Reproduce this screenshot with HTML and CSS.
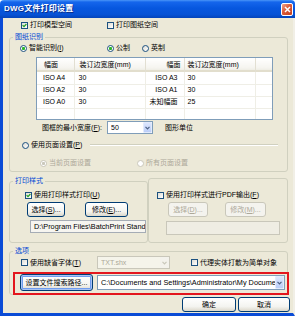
FILE: index.html
```html
<!DOCTYPE html>
<html>
<head>
<meta charset="utf-8">
<title>DWG文件打印设置</title>
<link rel="stylesheet" href="styles.css">
</head>
<body>
<div class="window">
  <div class="titlebar">
    <span class="title">DWG文件打印设置</span>
    <span class="close"><svg width="7" height="7" viewBox="0 0 7 7"><path d="M1 1L6 6M6 1L1 6" stroke="#fff" stroke-width="1.5"/></svg></span>
  </div>
  <div class="client">
    <div class="row top-checks">
      <span class="chk w-model"><span class="box"><svg viewBox="0 0 5 5"><path d="M0.6 2.2L2 3.7L4.4 1" fill="none" stroke="#21A121" stroke-width="1.2"/></svg></span>打印模型空间</span>
      <span class="chk"><span class="box"></span>打印图纸空间</span>
    </div>

    <fieldset class="group g-paper">
      <legend>图纸识别</legend>
      <div class="row radios">
        <span class="opt w-smart"><span class="radio on"></span>智能识别(<u>I</u>)</span>
        <span class="opt w-metric"><span class="radio on"></span>公制</span>
        <span class="opt"><span class="radio"></span>英制</span>
      </div>
      <div class="list">
        <table>
          <tr><th class="c1">幅面</th><th class="c2">装订边宽度(mm)</th><th class="c3">幅面</th><th class="c4">装订边宽度(mm)</th><th class="c5"></th></tr>
          <tr><td>ISO A4</td><td>30</td><td class="r">ISO A3</td><td>30</td><td></td></tr>
          <tr><td>ISO A2</td><td>30</td><td class="r">ISO A1</td><td>30</td><td></td></tr>
          <tr><td>ISO A0</td><td>30</td><td class="r">未知幅面</td><td>25</td><td></td></tr>
          <tr><td></td><td></td><td></td><td></td><td></td></tr>
        </table>
      </div>
      <div class="row minw">
        <span class="lbl">图框的最小宽度(<u>F</u>):</span>
        <span class="combo c50"><span class="val">50</span><span class="drop"><svg width="5" height="4" viewBox="0 0 5 4"><path d="M0.5 0.8L2.5 2.8L4.5 0.8" fill="none" stroke="#4D6185" stroke-width="1.2"/></svg></span></span>
        <span class="unit">图形单位</span>
      </div>
      <div class="row pageset">
        <span class="opt"><span class="radio"></span>使用页面设置(<u>P</u>)</span>
        <span class="sep"></span>
      </div>
      <div class="row pagesub">
        <span class="opt off w-cur"><span class="radio on"></span>当前页面设置</span>
        <span class="opt off"><span class="radio"></span>所有页面设置</span>
      </div>
    </fieldset>

    <div class="styles">
      <fieldset class="group g-style">
        <legend>打印样式</legend>
        <div class="row use-style">
          <span class="chk"><span class="box"><svg viewBox="0 0 5 5"><path d="M0.6 2.2L2 3.7L4.4 1" fill="none" stroke="#21A121" stroke-width="1.2"/></svg></span>使用打印样式打印(<u>U</u>)</span>
        </div>
        <div class="row btns">
          <span class="btn b-sel">选择(<u>S</u>)...</span>
          <span class="btn b-mod">修改(<u>E</u>)...</span>
        </div>
        <div class="field">D:\Program Files\BatchPrint Standard\Print Styles</div>
      </fieldset>
      <div class="group g-pdf">
        <div class="row">
          <span class="chk"><span class="box"></span>使用打印样式进行PDF输出(<u>F</u>)</span>
        </div>
        <div class="row btns">
          <span class="btn off b-sel2">选择(<u>D</u>)...</span>
          <span class="btn off b-mod2">修改(<u>M</u>)...</span>
        </div>
        <div class="field off"></div>
      </div>
    </div>

    <fieldset class="group g-opt">
      <legend>选项</legend>
      <div class="row font-row">
        <span class="chk w-font"><span class="box"></span>使用缺省字体(<u>T</u>)</span>
        <span class="combo off c-txt"><span class="val">TXT.shx</span><span class="drop"><svg width="5" height="4" viewBox="0 0 5 4"><path d="M0.5 0.8L2.5 2.8L4.5 0.8" fill="none" stroke="#C9C7BA" stroke-width="1.2"/></svg></span></span>
        <span class="chk proxy"><span class="box"></span>代理实体打散为简单对象</span>
      </div>
      <div class="mark">
        <span class="btn focus b-path">设置文件搜索路径...</span>
        <span class="combo c-path"><span class="val">C:\Documents and Settings\Administrator\My Documents</span><span class="drop"><svg width="5" height="4" viewBox="0 0 5 4"><path d="M0.5 0.8L2.5 2.8L4.5 0.8" fill="none" stroke="#4D6185" stroke-width="1.2"/></svg></span></span>
      </div>
    </fieldset>

    <div class="row actions">
      <span class="btn b-ok">确定</span>
      <span class="btn b-cancel">取消</span>
    </div>
  </div>
</div>
</body>
</html>
```

FILE: styles.css
```css
* { box-sizing: border-box; }
body { margin: 0; background: #fff; color: #000; font-family: "Liberation Sans", "Noto Sans CJK SC", sans-serif; font-size: 7px; line-height: 10px; }
u { text-decoration-thickness: 1px; text-underline-offset: 1px; }

.window { width: 295px; height: 316px; display: flex; flex-direction: column; }
.titlebar { height: 18px; flex: none; display: flex; align-items: center; justify-content: space-between; padding: 0 2px 0 4px; border-radius: 4px 4px 0 0; background: linear-gradient(#4A95F8 0, #1566EC 2px, #0757DF 45%, #0652D6 80%, #0444BA 100%); }
.title { color: #fff; font-weight: bold; font-size: 8px; letter-spacing: 0.2px; text-shadow: 1px 1px 0 #0A2F8C; }
.close { width: 12px; height: 13px; display: flex; align-items: center; justify-content: center; border: 1px solid #fff; border-radius: 2px; background: linear-gradient(135deg, #F0A58F, #DC5A38 45%, #C4401F); }
.client { flex: 1; background: #ECE9D8; border-left: 3px solid #0A4BD6; border-right: 2px solid #F1EFE6; border-bottom: 3px solid #0A4BD6; padding-top: 2px; }

.row { display: flex; align-items: center; height: 10px; white-space: nowrap; }
.chk, .opt { display: flex; align-items: center; white-space: nowrap; }
.box { width: 7px; height: 7px; flex: none; margin-right: 2px; border: 1px solid #1C5180; background: linear-gradient(135deg, #DCDCD5, #fff); display: flex; }
.box svg { width: 5px; height: 5px; }
.radio { width: 7px; height: 7px; flex: none; margin-right: 2px; border: 1px solid #1C5180; border-radius: 50%; background: linear-gradient(135deg, #DCDCD5, #fff); }
.radio.on { background: radial-gradient(circle, #2DB52D 0 1.3px, #fff 1.9px); }
.off { color: #ACA899; }
.off .radio { border-color: #CAC8BB; background: #fff; }
.off .radio.on { background: radial-gradient(circle, #CAC8BB 0 1.3px, #fff 1.9px); }

.top-checks { margin-top: 0; padding-left: 18px; }
.w-model { width: 86px; }

.group { margin: 0; padding: 0; min-width: 0; border: 1px solid #D0D0BF; border-radius: 3px; }
.group legend { margin-left: 3px; padding: 0 2px; height: 10px; line-height: 10px; color: #0046D5; }

.g-paper { margin: 2px 5px 0 6px; padding-bottom: 3px; }
.radios { margin-top: 1px; padding-left: 10px; }
.w-smart { width: 87px; }
.w-metric { width: 35px; }

.list { margin: 4px 0 0 26px; width: 237px; height: 63px; border: 1px solid #7F9DB9; background: #fff; overflow: hidden; }
.list table { width: 235px; border-collapse: collapse; table-layout: fixed; }
.list th { height: 14px; padding: 0; font-weight: normal; text-align: left; background: linear-gradient(#fff, #F5F4EF 70%, #E9E7DB); border-right: 1px solid #E2DFD2; box-shadow: inset 0 -2px 0 #E2DECD; }
.list td { height: 12px; padding: 0; border-right: 1px solid #EFEEE6; border-bottom: 1px solid #EFEEE6; white-space: nowrap; }
.list .c1 { width: 37px; padding-left: 7px; }
.list .c2 { width: 71px; padding-left: 5px; }
.list .c3 { width: 39px; text-align: right; padding-right: 3px; }
.list .c4 { width: 71px; padding-left: 3px; }
.list .c5 { width: 17px; border-right: none; }
.list td:nth-child(1) { padding-left: 6px; }
.list td:nth-child(2) { padding-left: 4px; }
.list td.r { text-align: right; padding-right: 6px; }
.list td:nth-child(4) { padding-left: 3px; }

.combo { display: flex; align-items: center; height: 13px; border: 1px solid #7F9DB9; background: #fff; padding-left: 3px; }
.combo .val { flex: 1; overflow: hidden; white-space: nowrap; }
.drop { width: 9px; height: 11px; flex: none; display: flex; align-items: center; justify-content: center; border: 1px solid #E2EAFC; border-radius: 1px; background: linear-gradient(#DCE6FD, #BBCEF8); }
.combo.off { border-color: #C9C7BA; background: #F5F4EA; }
.combo.off .drop { background: #F3F2EC; border-color: #F3F2EC; }

.minw { height: 13px; margin-top: 1px; }
.lbl { width: 97px; text-align: right; padding-right: 5px; }
.c50 { width: 46px; }
.unit { margin-left: 12px; }

.pageset { margin-top: 6px; padding-left: 12px; }
.sep { flex: 1; height: 2px; margin: 0 9px 0 8px; border-top: 1px solid #D0D0BF; border-bottom: 1px solid #fff; }
.pagesub { margin-top: 8px; padding-left: 30px; }
.w-cur { width: 97px; }

.styles { display: flex; margin: 4px 5px 0 6px; }
.g-style { width: 139px; flex: none; padding-bottom: 9px; }
.use-style { margin-top: 4px; padding-left: 15px; }
.btns { height: 15px; margin-top: 2px; }
.btn { height: 15px; display: flex; align-items: center; justify-content: center; border: 1px solid #003C74; border-radius: 3px; background: linear-gradient(#fff, #F4F4F0 65%, #DCD8CB); white-space: nowrap; }
.btn.off { border-color: #C9C7BA; background: #F4F3EE; color: #ACA899; }
.btn.focus { box-shadow: inset 0 0 0 1px #A8C4F5, inset 0 0 0 2px #6F9CEE; }
.g-style .btns { padding-left: 17px; }
.b-sel { width: 38px; }
.b-mod { width: 43px; margin-left: 20px; }
.field { height: 13px; margin: 3px 0 0 20px; width: 116px; padding-left: 3px; border: 1px solid #A5ACB5; background: #F6F5F0; overflow: hidden; white-space: nowrap; line-height: 11px; font-size: 7.3px; }

.g-pdf { flex: 1; margin-top: 2px; padding: 11px 0 0 8px; }
.g-pdf .btns { padding-left: 11px; }
.b-sel2 { width: 40px; }
.b-mod2 { width: 41px; margin-left: 17px; }
.field.off { width: 114px; height: 14px; margin: 4px 0 0 9px; border-color: #C9C7BA; background: #EFEDE3; }

.g-opt { margin: 3px 5px 0 6px; padding-bottom: 0; }
.font-row { height: 13px; padding-left: 11px; }
.w-font { width: 76px; }
.c-txt { width: 73px; }
.proxy { margin-left: 21px; }
.mark { display: flex; align-items: flex-start; height: 23px; margin: 3px -2px -1px 3px; padding: 0 2px 0 5px; border: 2px solid #E3161E; }
.b-path { width: 73px; height: 17px; margin-right: 4px; }
.c-path { flex: 1; min-width: 0; height: 15px; margin-top: 1px; }
.c-path .val { font-size: 7.3px; }
.c-path .drop { height: 13px; }

.actions { justify-content: flex-end; height: 15px; margin-top: 2px; padding-right: 3px; }
.b-ok { width: 54px; margin-right: 2px; }
.b-cancel { width: 52px; }
```
